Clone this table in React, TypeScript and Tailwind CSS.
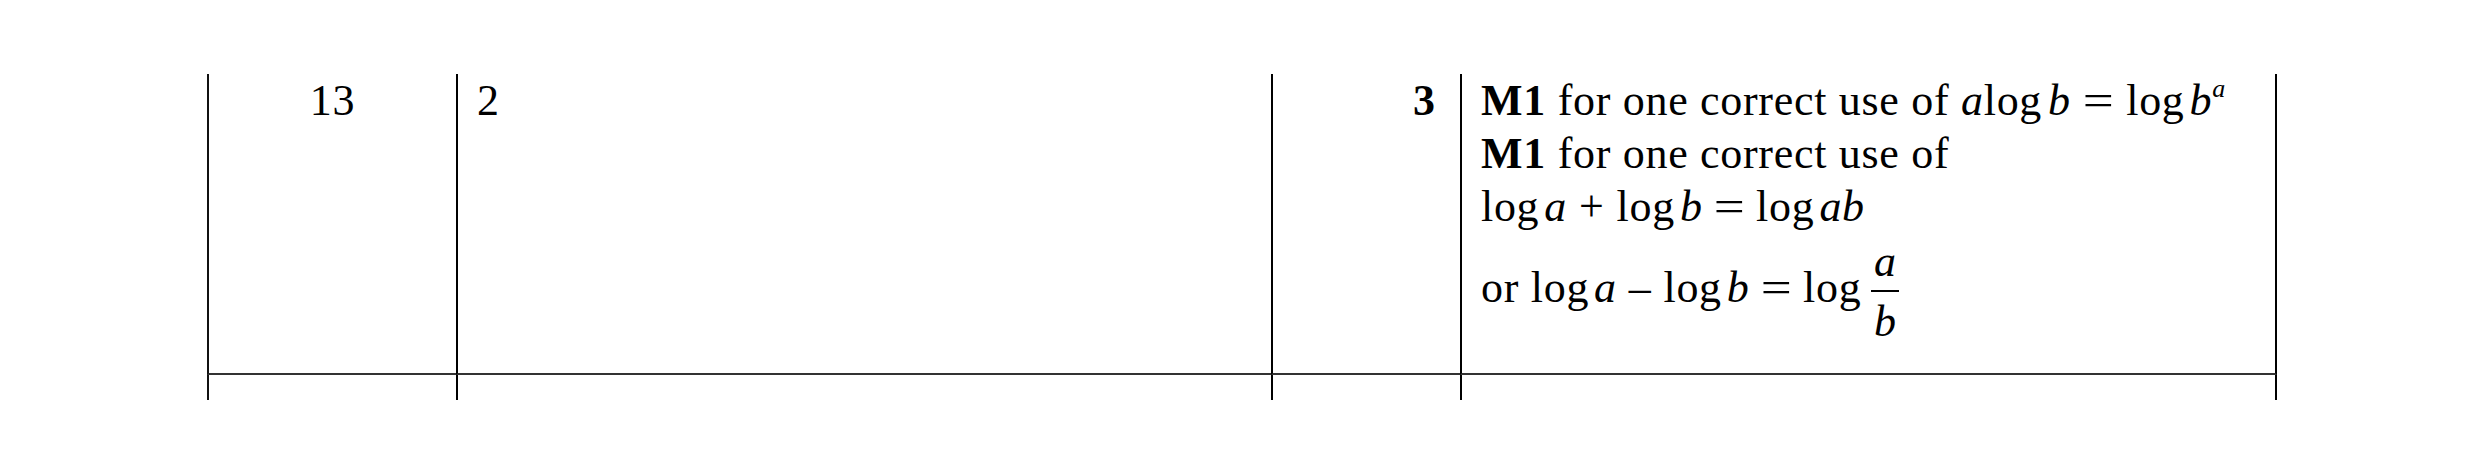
import React from "react";

function Sup({ children }: { children: React.ReactNode }) {
  return <i className="text-[26px] leading-[0] align-[18px] tracking-normal">{children}</i>;
}

function Eq({ className = "" }: { className?: string }) {
  return <span className={"inline-block scale-x-[1.25] mr-[3px] " + className}>=</span>;
}

export default function App() {
  return (
    <div className="w-full h-[476px] bg-white pt-[74px] pl-[207px] text-black">
      <div className="grid grid-cols-[249px_815px_189px_817px] font-['Liberation_Serif',serif] text-[44px] leading-[53px]">
        {/* Row 1 */}
        <div className="h-[301px] border-l-2 border-b-2 border-l-[#111] border-b-[#333] text-center tracking-[0.7px]">13</div>
        <div className="h-[301px] border-l-2 border-b-2 border-l-black border-b-[#333] pl-[19px]">2</div>
        <div className="h-[301px] border-l-2 border-b-2 border-l-black border-b-[#333] pr-[25px] text-right font-bold">3</div>
        <div className="h-[301px] border-l-2 border-r-2 border-b-2 border-l-black border-r-black border-b-[#333] pl-[19px] whitespace-nowrap tracking-[0.7px]">
          <div>
            <b>M1</b> for one correct use of <i>a</i>log<i className="ml-[6px]">b</i>
            <Eq className="ml-[15px]" />
            <span className="ml-[12px]">log</span>
            <i className="ml-[5px]">b</i>
            <Sup>a</Sup>
          </div>
          <div>
            <b>M1</b> for one correct use of
          </div>
          <div>
            log<i className="ml-[5px]">a</i>
            <span className="ml-[12px]">+</span>
            <span className="ml-[12px]">log</span>
            <i className="ml-[5px]">b</i>
            <Eq className="ml-[14px]" />
            <span className="ml-[11px]">log</span>
            <i className="ml-[5px]">ab</i>
          </div>
          <div className="mt-[14px]">
            or log<i className="ml-[5px]">a</i>
            <span className="ml-[12px]">–</span>
            <span className="ml-[12px]">log</span>
            <i className="ml-[5px]">b</i>
            <Eq className="ml-[14px]" />
            <span className="ml-[11px]">log</span>
            <span className="ml-[10px] inline-flex flex-col items-center align-[26px]">
              <i className="leading-[30px]">a</i>
              <span className="mt-[13px] h-[2px] w-[28px] bg-black" />
              <i className="mt-[15px] leading-[30px]">b</i>
            </span>
          </div>
        </div>
        {/* Row 2 (cut off) */}
        <div className="h-[25px] border-l-2 border-l-[#111]" />
        <div className="h-[25px] border-l-2 border-l-black" />
        <div className="h-[25px] border-l-2 border-l-black" />
        <div className="h-[25px] border-l-2 border-r-2 border-l-black border-r-black" />
      </div>
    </div>
  );
}
